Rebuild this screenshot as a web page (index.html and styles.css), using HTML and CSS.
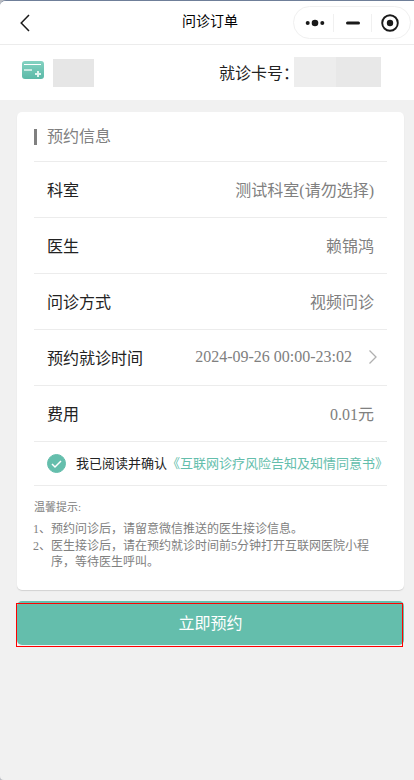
FILE: index.html
```html
<!DOCTYPE html>
<html lang="zh-CN">
<head>
  <meta charset="UTF-8">
  <meta name="viewport" content="width=device-width, initial-scale=1.0">
  <title>问诊订单</title>
  <link rel="stylesheet" href="styles.css">
</head>
<body>

<header class="navbar">
  <button class="back" type="button" aria-label="返回">
    <svg width="10" height="18" viewBox="0 0 10 18" fill="none" stroke="#1a1a1a" stroke-width="1.5"><path d="M9 1L1.2 9L9 17"/></svg>
  </button>
  <h1>问诊订单</h1>
  <div class="capsule">
    <button type="button" aria-label="更多">
      <svg width="20" height="8" viewBox="0 0 20 8" fill="#1a1a1a"><circle cx="2.7" cy="4" r="2"/><circle cx="10" cy="4" r="3.3"/><circle cx="17.3" cy="4" r="2"/></svg>
    </button>
    <button type="button" aria-label="最小化">
      <svg width="14" height="4" viewBox="0 0 14 4"><rect width="14" height="3" y="0.5" rx="1.5" fill="#1a1a1a"/></svg>
    </button>
    <button type="button" aria-label="关闭">
      <svg width="18" height="18" viewBox="0 0 18 18"><circle cx="9" cy="9" r="7.8" fill="none" stroke="#1a1a1a" stroke-width="1.9"/><circle cx="9" cy="9" r="3.2" fill="#1a1a1a"/></svg>
    </button>
  </div>
</header>

<section class="patient">
  <svg class="card-icon" width="22" height="18" viewBox="0 0 22 18">
    <defs>
      <linearGradient id="cardFill" x1="0" y1="0" x2="0" y2="1">
        <stop offset="0" stop-color="#84d2c1"/>
        <stop offset="1" stop-color="#5bb9a8"/>
      </linearGradient>
    </defs>
    <rect width="22" height="18" rx="3" fill="url(#cardFill)"/>
    <rect x="2" y="3" width="17" height="1" fill="#fff"/>
    <rect x="2" y="8" width="8" height="2" fill="#c5e9e1"/>
    <path d="M16 10v6M13 13h6" stroke="#e0f4f0" stroke-width="2"/>
  </svg>
  <span class="mask mask-name"></span>
  <span class="card-label">就诊卡号：</span>
  <span class="mask mask-number"></span>
</section>

<main>
  <section class="card">
    <h2>预约信息</h2>
    <dl>
      <div class="row"><dt>科室</dt><dd>测试科室(请勿选择)</dd></div>
      <div class="row"><dt>医生</dt><dd>赖锦鸿</dd></div>
      <div class="row"><dt>问诊方式</dt><dd>视频问诊</dd></div>
      <div class="row">
        <dt>预约就诊时间</dt>
        <dd>2024-09-26 00:00-23:02
          <svg class="arrow" width="8" height="14" viewBox="0 0 8 14" fill="none" stroke="#b0b0b0" stroke-width="1.3"><path d="M0.5 0.5L7 7L0.5 13.5"/></svg>
        </dd>
      </div>
      <div class="row"><dt>费用</dt><dd>0.01元</dd></div>
    </dl>
    <div class="agree">
      <span class="check">
        <input type="checkbox" id="agree" checked>
        <svg width="19" height="19" viewBox="0 0 19 19" fill="none" stroke="#fff" stroke-width="1.5"><path d="M5 10L8 13L14 7"/></svg>
      </span>
      <label for="agree">我已阅读并确认</label><a href="#">《互联网诊疗风险告知及知情同意书》</a>
    </div>
    <div class="tips">
      <h3>温馨提示:</h3>
      <p><span>1、</span>预约问诊后，请留意微信推送的医生接诊信息。</p>
      <p><span>2、</span>医生接诊后，请在预约就诊时间前5分钟打开互联网医院小程序，等待医生呼叫。</p>
    </div>
  </section>
  <button class="submit" type="button">立即预约</button>
</main>

</body>
</html>
```

FILE: styles.css
```css
* {
  box-sizing: border-box;
}

html {
  background-color: #b9bcc2;
}

body {
  margin: 0;
  min-height: 100vh;
  background-color: #f1f1f1;
  border-top: 1px solid #6f7f99;
  border-radius: 6px 0 0 4px;
  overflow: hidden;
  color: #222;
  font-family: "Liberation Serif", "Noto Sans CJK SC", serif;
  font-size: 16px;
}

h1, h2, h3, p, dl, dd {
  margin: 0;
  font-weight: 400;
}

button {
  padding: 0;
  border: none;
  background: none;
  font-family: inherit;
  cursor: pointer;
}

.navbar {
  display: grid;
  grid-template-columns: 1fr auto 1fr;
  align-items: center;
  height: 44px;
  padding: 0 3px 0 9px;
  background-color: #fff;
  border-bottom: 1px solid #ececec;
}

.back {
  display: flex;
  align-items: center;
  justify-self: start;
  height: 40px;
  padding: 0 11px;
}

.navbar h1 {
  padding-bottom: 2px;
  color: #000;
  font-size: 14px;
  line-height: 20px;
}

.capsule {
  display: grid;
  grid-template-columns: 36px 38px 36px;
  align-items: center;
  justify-content: center;
  justify-self: end;
  width: 118px;
  height: 33px;
  border: 1px solid #f0f0f0;
  border-radius: 17px;
}

.capsule button {
  display: flex;
  align-items: center;
  justify-content: center;
  height: 18px;
}

.capsule button + button {
  border-left: 1px solid #f0f0f0;
}

.patient {
  display: flex;
  align-items: center;
  height: 55px;
  padding: 0 33px 0 22px;
  background-color: #fff;
}

.card-icon {
  margin-bottom: 6px;
}

.mask {
  background-color: #e6e6e6;
}

.mask-name {
  width: 41px;
  height: 28px;
  margin-left: 9px;
}

.mask-number {
  width: 87px;
  height: 30px;
  margin-bottom: 2px;
  background: linear-gradient(to right, #ededed 42px, #e8e8e8 42px);
}

.card-label {
  width: 75px;
  margin-left: auto;
  padding-bottom: 2px;
  white-space: nowrap;
}

main {
  padding: 12px 10px 12px 17px;
}

.card {
  padding: 0 17px 19px;
  background-color: #fff;
  border-radius: 5px;
  box-shadow: 0 1px 1px #d2d2d2;
}

.card h2 {
  display: flex;
  align-items: center;
  height: 50px;
  border-bottom: 1px solid #ececec;
  color: #808080;
  font-size: 16px;
  line-height: 20px;
}

.card h2::before {
  content: "";
  width: 3px;
  height: 16px;
  margin-right: 10px;
  background-color: #808080;
}

.row {
  display: flex;
  align-items: center;
  justify-content: space-between;
  height: 56px;
  padding: 0 13px 2px;
  border-bottom: 1px solid #ececec;
}

.row dd {
  display: flex;
  align-items: center;
  color: #808080;
}

.arrow {
  margin: 0 -3px 0 17px;
}

.agree {
  display: flex;
  align-items: center;
  height: 44px;
  padding-left: 13px;
  border-bottom: 1px solid #ececec;
  font-size: 13px;
  white-space: nowrap;
}

.agree label,
.agree a {
  padding-bottom: 2px;
}

.check {
  display: grid;
  margin-right: 10px;
}

.check input,
.check svg {
  grid-area: 1 / 1;
}

.check input {
  appearance: none;
  width: 19px;
  height: 19px;
  margin: 0;
  border: 1px solid #64beac;
  border-radius: 50%;
}

.check input:checked {
  background-color: #64beac;
}

.check svg {
  pointer-events: none;
}

.agree a {
  color: #64beac;
  text-decoration: none;
}

.tips {
  padding-top: 13px;
  color: #808080;
  font-size: 12px;
  line-height: 16px;
}

.tips h3 {
  margin-bottom: 6px;
  font-size: 11px;
}

.tips p {
  margin-bottom: 1px;
  padding-left: 17px;
}

.tips p span {
  display: inline-block;
  width: 18px;
  margin-left: -18px;
}

.submit {
  position: relative;
  display: block;
  width: 100%;
  height: 44px;
  margin-top: 11px;
  padding-bottom: 3px;
  border-radius: 5px;
  background-color: #64beac;
  color: #fff;
  font-size: 16px;
}

/* red frame over the button */
.submit::after {
  content: "";
  position: absolute;
  inset: 2px 1px -2px -1px;
  border: 1px solid #f00;
}
```
